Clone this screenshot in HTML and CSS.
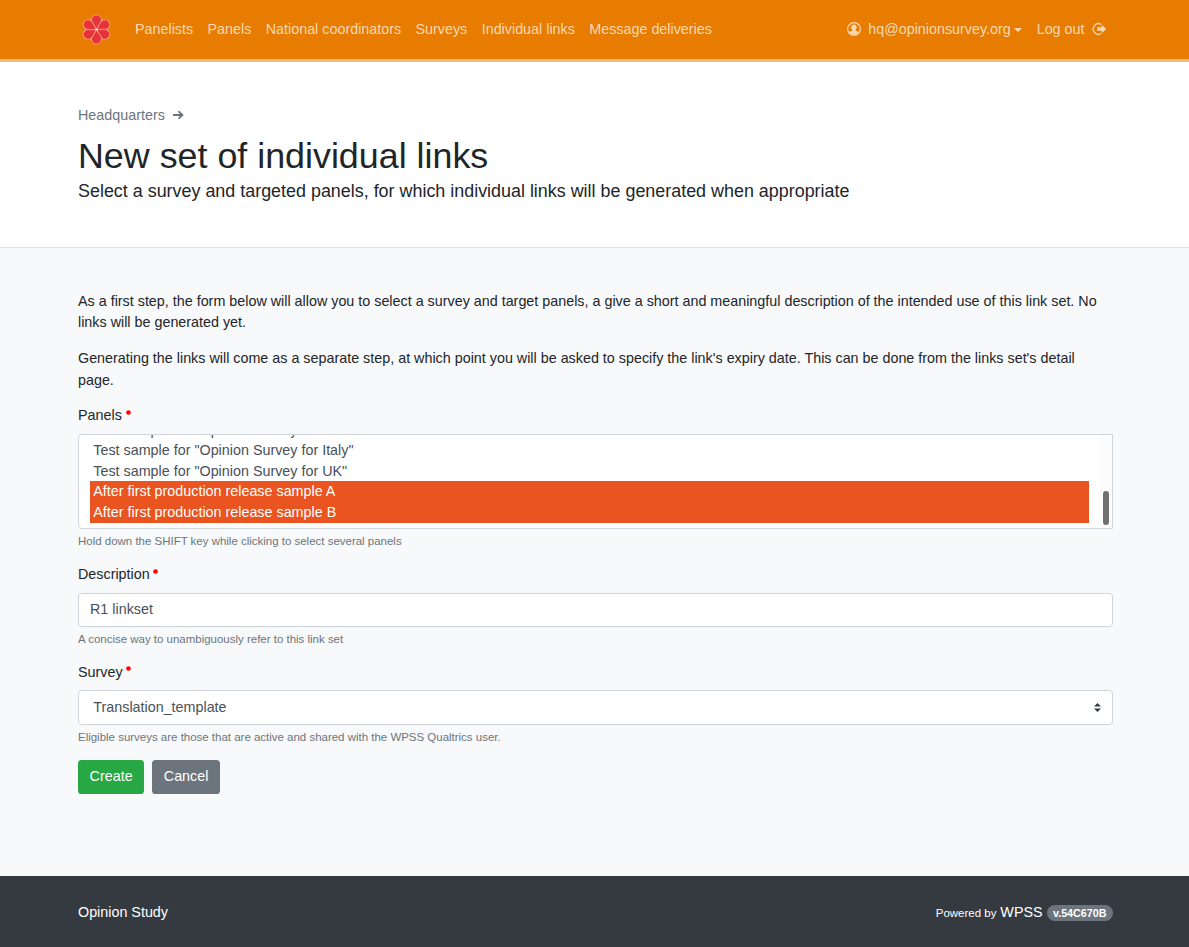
FILE: index.html
```html
<!DOCTYPE html>
<html lang="en">
<head>
<meta charset="utf-8">
<title>New set of individual links</title>
<link rel="stylesheet" href="styles.css">
</head>
<body>
<nav class="navbar">
  <div class="container navbar-inner">
    <a class="brand" href="#">
      <svg width="30" height="32" viewBox="-15.500 -16.500 30 32" fill="#e7313c" stroke="#f5a172" stroke-width="1">
        <defs><path id="petal" d="M0 0C-1.500-3.500-5-6-5-9.600A5 5 0 0 1 5-9.600C5-6 1.500-3.500 0 0Z"/></defs>
        <use href="#petal"/><use href="#petal" transform="rotate(60)"/><use href="#petal" transform="rotate(120)"/>
        <use href="#petal" transform="rotate(180)"/><use href="#petal" transform="rotate(240)"/><use href="#petal" transform="rotate(300)"/>
        <circle r="1.300" fill="#fbd3b5" stroke="none"/>
      </svg>
    </a>
    <div class="nav-links">
      <a href="#">Panelists</a><a href="#">Panels</a><a href="#">National coordinators</a><a href="#">Surveys</a><a href="#">Individual links</a><a href="#">Message deliveries</a>
    </div>
    <div class="nav-user">
      <a href="#" class="user"><svg width="14" height="14" viewBox="0 0 14 14"><circle cx="7" cy="7" r="6.400" fill="none" stroke="currentColor" stroke-width="1.200"/><path fill="currentColor" d="M7 2.400c1.800 0 2.700 1.100 2.700 2.800 0 1.100-.4 2-1 2.600v.9l3 1.100c-.8 1.900-2.600 3-4.700 3s-3.900-1.100-4.700-3l3-1.100v-.9c-.6-.6-1-1.500-1-2.600C4.300 3.500 5.200 2.400 7 2.400Z"/></svg><span>hq@opinionsurvey.org</span><i class="caret"></i></a>
      <a href="#" class="logout"><span>Log out</span><svg width="15" height="14" viewBox="0 0 15 14"><path d="M9.300 2.500A5.300 5.300 0 1 0 9.300 11.500" fill="none" stroke="currentColor" stroke-width="1.300"/><path fill="currentColor" d="M5.300 5.200h4.400V2.800L14.300 7l-4.600 4.200V8.800H5.300Z"/></svg></a>
    </div>
  </div>
</nav>
<header class="page-header">
  <div class="container">
    <div class="breadcrumb"><a href="#">Headquarters</a><svg width="11" height="10" viewBox="0 0 11 10"><path fill="currentColor" d="M0 4.100h6.800L4.800 1.600 6.300.8 10.800 5 6.300 9.200 4.800 8.400l2-2.500H0Z"/></svg></div>
    <h1>New set of individual links</h1>
    <p class="lead">Select a survey and targeted panels, for which individual links will be generated when appropriate</p>
  </div>
</header>
<main>
  <div class="container">
    <p>As a first step, the form below will allow you to select a survey and target panels, a give a short and meaningful description of the intended use of this link set. No links will be generated yet.</p>
    <p>Generating the links will come as a separate step, at which point you will be asked to specify the link's expiry date. This can be done from the links set's detail page.</p>
    <form>
      <div class="group group-panels">
        <div class="label">Panels<svg class="required" width="5" height="5"><circle cx="2.500" cy="2.500" r="2.300" fill="#f00"/></svg></div>
        <div class="listbox" role="listbox">
          <div class="options">
            <div class="option">Test sample for "Opinion Survey for France"</div>
            <div class="option">Test sample for "Opinion Survey for Italy"</div>
            <div class="option">Test sample for "Opinion Survey for UK"</div>
            <div class="option selected">After first production release sample A</div>
            <div class="option selected">After first production release sample B</div>
          </div>
          <div class="scroll-track"><div class="scroll-thumb"></div></div>
        </div>
        <small>Hold down the SHIFT key while clicking to select several panels</small>
      </div>
      <div class="group">
        <div class="label">Description<svg class="required" width="5" height="5"><circle cx="2.500" cy="2.500" r="2.300" fill="#f00"/></svg></div>
        <div class="control">R1 linkset</div>
        <small>A concise way to unambiguously refer to this link set</small>
      </div>
      <div class="group group-survey">
        <div class="label">Survey<svg class="required" width="5" height="5"><circle cx="2.500" cy="2.500" r="2.300" fill="#f00"/></svg></div>
        <div class="control select"><span>Translation_template</span><svg width="7" height="9" viewBox="0 0 7 9"><path fill="#343a40" d="M3.500 0 0 3.600h7zM3.500 9 0 5.400h7z"/></svg></div>
        <small>Eligible surveys are those that are active and shared with the WPSS Qualtrics user.</small>
      </div>
      <div class="actions"><button type="button" class="btn create">Create</button><button type="button" class="btn cancel">Cancel</button></div>
    </form>
  </div>
</main>
<footer>
  <div class="container footer-inner">
    <span>Opinion Study</span>
    <div class="powered"><span class="by">Powered by</span> WPSS <span class="badge">v.54C670B</span></div>
  </div>
</footer>
</body>
</html>
```
FILE: styles.css
```css
* { box-sizing: border-box; }
html { font-size: 14.34px; }
body {
  margin: 0;
  height: 947px;
  display: flex;
  flex-direction: column;
  font: 1rem/21.600px "Liberation Sans", Arial, sans-serif;
  color: #212529;
  background: #f8f9fa;
  overflow: hidden;
}
a { color: inherit; text-decoration: none; }
p, h1 { margin: 0; }
svg { display: block; flex: none; }
.container { width: 1035px; margin: 0 0 0 78px; }

.navbar { flex: none; height: 62px; background: #e77c00; border-bottom: 3px solid #f3bc7d; color: #f8d8b3; }
.navbar-inner { height: 59px; display: flex; align-items: center; }
.brand { margin: 0 24px 0 3px; padding-bottom: 1px; }
.nav-links { display: flex; gap: 14.400px; }
.nav-user { display: flex; margin-left: auto; padding-right: 6.500px; gap: 14.400px; }
.user, .logout { display: flex; align-items: center; }
.user svg { margin: 0 7px 1px 0; }
.logout svg { margin: 0 0 1px 7px; }
.caret { margin-left: 3.500px; border: 4.300px solid transparent; border-top-color: currentColor; border-bottom: 0; }

.page-header { flex: none; height: 186px; padding-top: 42.500px; background: #fff; border-bottom: 1px solid #dee2e6; }
.breadcrumb { display: flex; align-items: center; gap: 8px; color: #6c757d; }
h1 { margin-top: 9.400px; font-size: 2.5rem; font-weight: 400; line-height: 43.200px; }
.lead { font-size: 1.25rem; line-height: 25px; }

main { flex: 1; background: #f8f9fa; padding-top: 42.600px; }
main p { margin-bottom: 13.200px; }
main p + p { line-height: 22px; margin-bottom: 14.200px; }
.group { height: 97.800px; }
.group-panels { height: 159px; }
.label { height: 21.600px; margin-bottom: 7.200px; display: flex; }
.required { margin: 4.500px 0 0 3.700px; }
.listbox { height: 95px; display: flex; background: #fff; border: 1px solid #ced4da; border-radius: 3.600px 0 0 3.600px; overflow: hidden; color: #495057; }
.options { flex: 1; display: flex; flex-direction: column; justify-content: flex-end; padding: 0 11px 5px; }
.option { flex: none; height: 20.300px; line-height: 21.700px; padding-left: 3.300px; }
.selected { height: 21px; line-height: 20.700px; background: #e95420; color: #fff; }
.scroll-track { width: 12px; display: flex; justify-content: center; align-items: flex-end; padding-bottom: 3px; background: #fcfcfc; }
.scroll-thumb { width: 6px; height: 34px; border-radius: 3px; background: #707070; }
small { display: block; margin-top: 3.600px; font-size: 80%; line-height: 17.300px; color: #6c757d; }
.control { height: 34px; border: 1px solid #ced4da; border-radius: 3.600px; background: #fff; color: #495057; padding: 0 11px; line-height: 31px; }
.select { height: 35px; display: flex; justify-content: space-between; align-items: center; padding-left: 14.300px; }
.group-survey .label { margin-bottom: 6.400px; }
.group-survey small { margin-top: 4.200px; }
.actions { display: flex; gap: 8px; }
.btn { height: 34px; border: 0; border-radius: 3.600px; padding: 0 11.600px; color: #fff; font: inherit; }
.create { background: #28a745; }
.cancel { background: #6c757d; }

footer { flex: none; height: 71px; background: #343a40; color: #fff; }
.footer-inner { height: 71px; padding-top: 2px; display: flex; justify-content: space-between; align-items: center; }
.powered { padding-top: 1px; }
.by { font-size: 80%; }
.badge { display: inline-block; font-size: 75%; font-weight: 700; line-height: 1; padding: .25em .6em; border-radius: 10rem; background: #6c757d; vertical-align: baseline; }
```
